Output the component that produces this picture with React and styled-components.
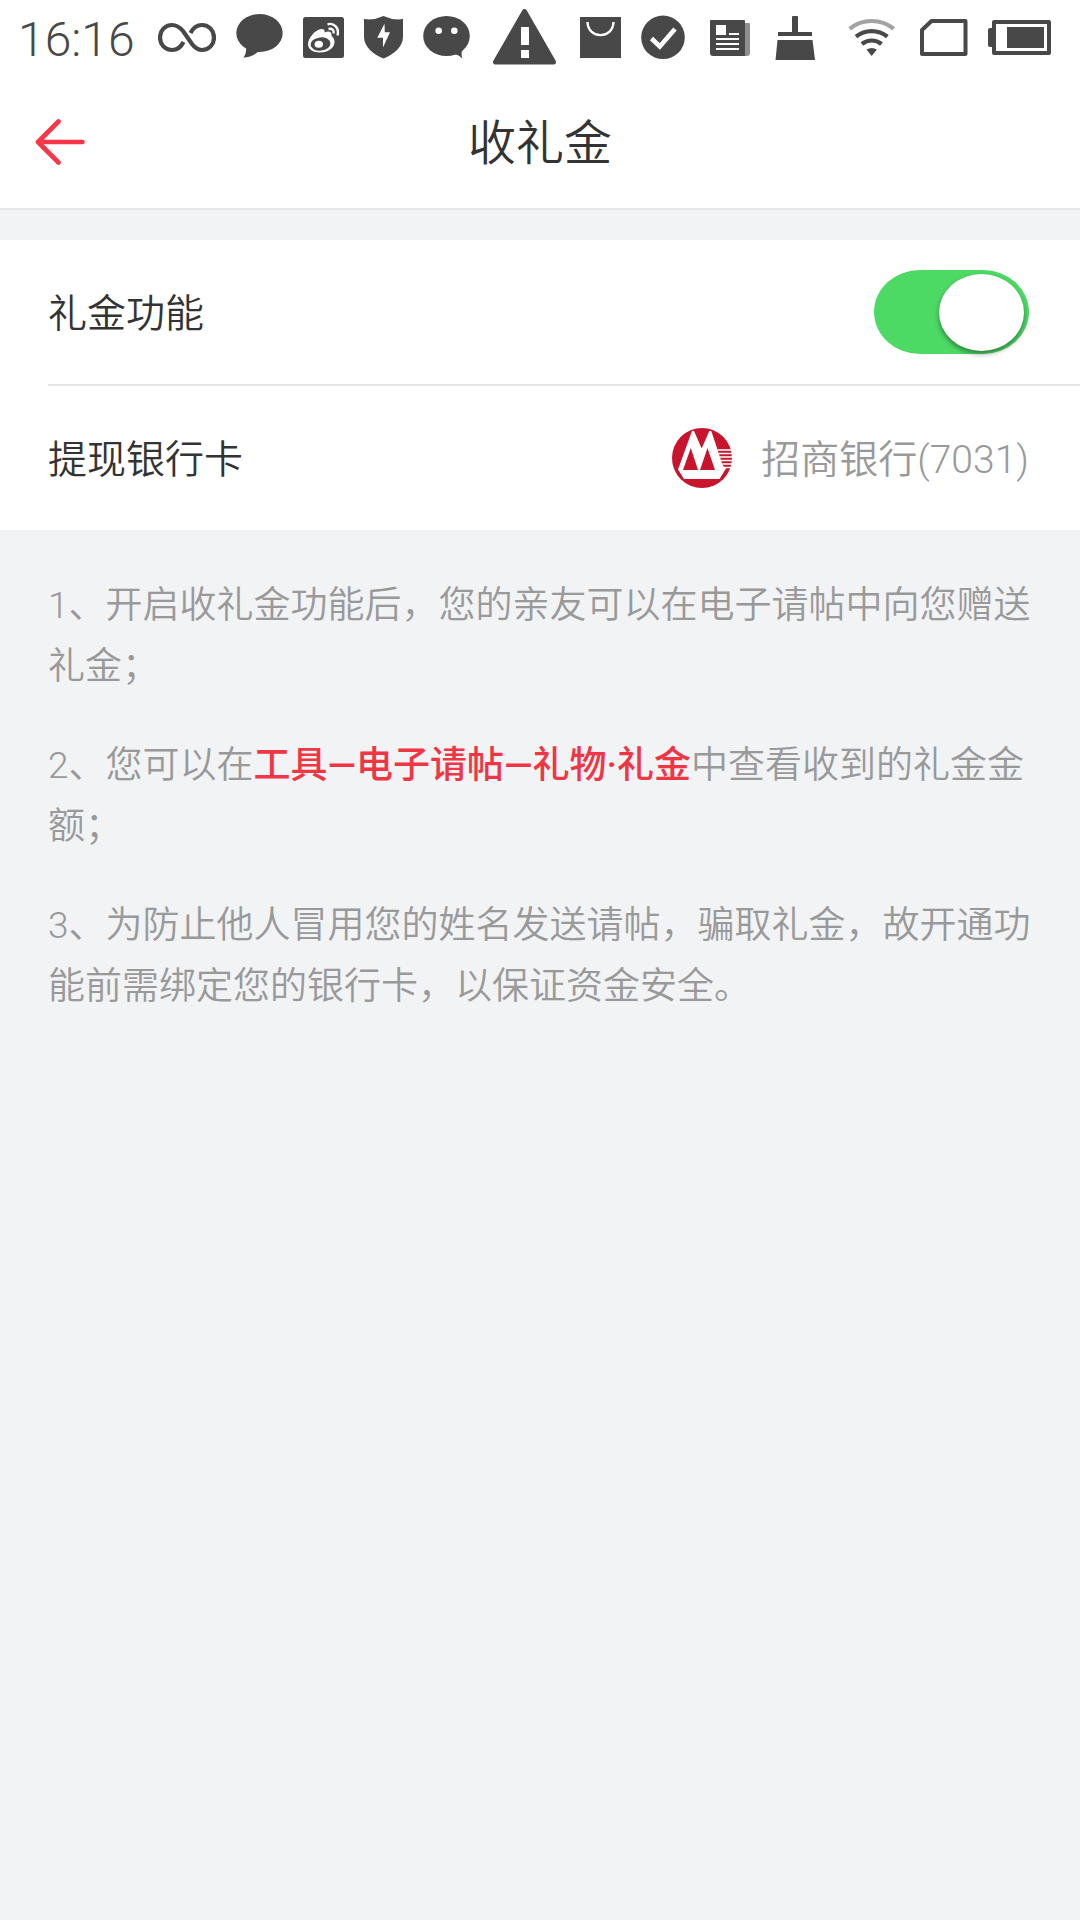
import React, {useState} from 'react'
import styled, { createGlobalStyle } from 'styled-components'


export default function App() {
    const [giftOn, setGiftOn] = useState(true)

    const toggleGift = () => {
        setGiftOn(!giftOn)
    }

    return (
        <>
            <GlobalStyle />
            <StatusBar />
            <Header>
                <BackButton type="button" aria-label="返回">
                    <BackArrow />
                </BackButton>
                <Title>收礼金</Title>
            </Header>
            <main>
                <Settings>
                    <Row>
                        <RowLabel htmlFor="gift">礼金功能</RowLabel>
                        <Switch id="gift" type="checkbox" checked={giftOn} onChange={toggleGift} />
                    </Row>
                    <Divider />
                    <Row>
                        <RowLabel as="span">提现银行卡</RowLabel>
                        <CardButton type="button">
                            <BankLogo />
                            <CardName>招商银行(7031)</CardName>
                        </CardButton>
                    </Row>
                </Settings>
                <Notes>
                    <Note>1、开启收礼金功能后，您的亲友可以在电子请帖中向您赠送礼金；</Note>
                    <Note>2、您可以在<Highlight>工具—电子请帖—礼物·礼金</Highlight>中查看收到的礼金金额；</Note>
                    <Note>3、为防止他人冒用您的姓名发送请帖，骗取礼金，故开通功能前需绑定您的银行卡，以保证资金安全。</Note>
                </Notes>
            </main>
        </>
    )
}

function StatusBar() {
    return (
        <Bar>
            <BarGroup>
                <Time>16:16</Time>
                {/* infinity */}
                <Glyph width="58" viewBox="0 0 58 74">
                    <path d="M25.500 42C23 47 19 50 14 50C7 50 2 44.500 2 37.500S7 25 14 25C19 25 22 27.500 25 31L34 44C37 48 40 50 44 50C51 50 56 44.500 56 37.500S51 25 44 25C39 25 35 28 32.500 33" fill="none" stroke="#484848" strokeWidth="4.200" />
                </Glyph>
                {/* message */}
                <Glyph width="47" viewBox="0 0 47 74">
                    <ellipse cx="23.500" cy="33" rx="23.200" ry="19" />
                    <path d="M9.500 45Q11.500 52 7.500 57.500Q16 57.500 23 51Z" />
                </Glyph>
                {/* weibo */}
                <Glyph width="41" viewBox="0 0 41 74">
                    <rect y="17" width="41" height="41" rx="2.500" />
                    <path d="M5 44C5 38 12 30 18 29C21 28.500 22 30 21.500 32.500C25 31 29 31 28.500 35.500C28.400 36.500 31.500 37.500 31.500 42C31.500 48 25 52.500 17 52.500C10 52.500 5 49 5 44Z" fill="#fff" />
                    <ellipse cx="17.500" cy="44" rx="10" ry="6.600" transform="rotate(-6 17.500 44)" />
                    <ellipse cx="15.800" cy="44.200" rx="4.200" ry="3.500" fill="#fff" />
                    <path d="M24.500 24.300C31 22.500 36.500 28 34.500 35.500M25.500 29C29 28 31.300 30 30.500 33.500" fill="none" stroke="#fff" strokeWidth="2.400" />
                </Glyph>
                {/* shield */}
                <Glyph width="39" viewBox="0 0 39 74">
                    <path d="M0 19Q10 20.500 19.500 16Q29 20.500 39 19V37C39 47 29 55 19.500 58.500C10 55 0 47 0 37Z" />
                    <path d="M20.500 23.700L13.300 37.700H19V47.500L26 32.300H20.800Z" fill="#fff" />
                </Glyph>
                {/* wechat */}
                <Glyph width="47" viewBox="0 0 47 74">
                    <ellipse cx="23.500" cy="36" rx="23.300" ry="20" />
                    <path d="M28 54.500Q34 53 39.500 58.500Q37.500 53 40 48Z" />
                    <circle cx="15.700" cy="30.700" r="3.300" fill="#fff" />
                    <circle cx="31.300" cy="30.700" r="3.300" fill="#fff" />
                </Glyph>
                {/* warning */}
                <Glyph width="69" viewBox="0 0 69 74">
                    <path d="M34.500 11.500L5.500 62H63.500Z" stroke="#484848" strokeWidth="5" strokeLinejoin="round" />
                    <path d="M31 27H39V45H31ZM31 50H39V58H31Z" fill="#fff" />
                </Glyph>
                {/* shopping bag */}
                <Glyph width="42" viewBox="0 0 42 74">
                    <rect x="1" y="17" width="41" height="41" />
                    <path d="M8.500 22C9 39.500 34 39.500 34.500 22" fill="none" stroke="#fff" strokeWidth="2.400" />
                </Glyph>
                {/* check */}
                <Glyph width="44" viewBox="0 0 44 74">
                    <circle cx="22" cy="37.300" r="21.800" />
                    <path d="M10.500 38.500L18.800 46.500L34 29" fill="none" stroke="#fff" strokeWidth="4.600" />
                </Glyph>
                {/* news */}
                <Glyph width="50" viewBox="0 0 50 74">
                    <path d="M38 23H44Q45 23 45 24V53Q45 56 42 56H38Z" fill="#8e8e8e" />
                    <path d="M6 20H39Q40 20 40 21V56H8Q5 56 5 53V21Q5 20 6 20Z" />
                    <path d="M11 25H21V35H11ZM24 33H34V35H24ZM11 38H34V40H11ZM11 43H34V45H11ZM11 48H34V50H11Z" fill="#fff" />
                </Glyph>
                {/* cleaner */}
                <Glyph width="41" viewBox="0 0 41 74">
                    <path d="M17 17Q17 16 18 16H22Q23 16 23 17V32H37V36H3V32H17ZM2.500 40H37.500L40 60H.500Z" />
                </Glyph>
            </BarGroup>
            <BarGroup>
                {/* wifi */}
                <Glyph width="53" viewBox="0 0 53 74">
                    <path d="M2.700 28.800A35 35 0 0 1 46.700 28.800" fill="none" stroke="#a3a3a3" strokeWidth="4.200" />
                    <path d="M9 36.600A25 25 0 0 1 40.400 36.600M14.900 44A15.500 15.500 0 0 1 34.500 44" fill="none" stroke="#484848" strokeWidth="4.200" />
                    <path d="M19.500 49.500Q24.700 46.500 29.900 49.500L24.700 56Z" />
                </Glyph>
                {/* sim */}
                <Glyph width="48" viewBox="0 0 48 74">
                    <path d="M2 30L11.500 21H45.500V54H2Z" fill="none" stroke="#484848" strokeWidth="4" strokeLinejoin="round" />
                </Glyph>
                {/* battery */}
                <Glyph width="63" viewBox="0 0 63 74">
                    <rect x="6" y="22" width="55" height="31" fill="none" stroke="#484848" strokeWidth="4" strokeLinejoin="round" />
                    <path d="M5 28H2Q0 28 0 30V45Q0 47 2 47H5ZM19 27H56V48H19Z" />
                </Glyph>
            </BarGroup>
        </Bar>
    )
}

function BackArrow() {
    return (
        <svg width="50" height="48" viewBox="0 0 50 48" fill="none" stroke="#f73648" strokeWidth="4.600" strokeLinecap="round" strokeLinejoin="round">
            <path d="M23.500 3.500L3 24L23.500 44.500M3 24H47.500" />
        </svg>
    )
}

function BankLogo() {
    return (
        <svg width="60" height="60" viewBox="0 0 60 60" aria-hidden="true">
            <circle cx="30" cy="30" r="30" fill="#c8152d" />
            <path d="M20 3H22L29.700 20.500L37.300 3H39.300L51 38L54 40.500L47.500 51H12L6 41.500Z" fill="#fff" />
            <path d="M18.800 20L11 42H26ZM35.500 20L28 42H43Z" fill="#c8152d" />
            <path d="M46 22H60M47 25.500H60M48 29H60M49 32.500H60M50 36H60M51 39.500H59" stroke="#fff" strokeWidth="1.500" />
        </svg>
    )
}

    const GlobalStyle = createGlobalStyle`
        body {
            margin: 0;
            background: #f1f3f5;
            color: #333;
            font-family: Roboto, "Noto Sans CJK SC", sans-serif;
            font-size: 39px;
            font-weight: 350;
        }
    `

    const Bar = styled.div`
        display: flex;
        justify-content: space-between;
        height: 74px;
        padding: 0 29px 0 18px;
        background: #fff;
    `

    const BarGroup = styled.div`
        display: flex;
        gap: 20px;
    `

    const Time = styled.span`
        padding-right: 3px;
        font-size: 48px;
        font-weight: 300;
        line-height: 80px;
        color: #484848;
    `

    const Glyph = styled.svg`
        flex: none;
        height: 74px;
        fill: #484848;
    `

    const Header = styled.header`
        display: grid;
        grid-template-columns: 1fr auto 1fr;
        align-items: center;
        height: 134px;
        padding: 0 35px;
        background: #fff;
        border-bottom: 2px solid #e6e6e6;
    `

    const BackButton = styled.button`
        display: flex;
        justify-self: start;
        padding: 2px 0 0;
        border: 0;
        background: none;
        cursor: pointer;
    `

    const Title = styled.h1`
        margin: 0;
        padding-bottom: 4px;
        font-size: 48px;
        font-weight: 350;
    `

    const Settings = styled.section`
        margin-top: 30px;
        background: #fff;
    `

    const Row = styled.div`
        display: flex;
        align-items: center;
        justify-content: space-between;
        height: 144px;
        padding: 0 51px 0 48px;
    `

    const RowLabel = styled.label`
        padding-bottom: 4px;
    `

    const Divider = styled.hr`
        height: 2px;
        margin: 0 0 0 48px;
        border: 0;
        background: #e6e6e6;
    `

    const Switch = styled.input`
        appearance: none;
        display: flex;
        align-items: center;
        justify-content: ${({ checked }) => checked ? 'flex-end' : 'flex-start'};
        width: 155px;
        height: 84px;
        margin: 0;
        padding: 0 5px;
        box-sizing: border-box;
        border-radius: 46px / 42px;
        background: ${({ checked }) => checked ? '#4cd964' : '#ddd'};
        cursor: pointer;
        &::before {
            content: '';
            width: 85px;
            height: 77px;
            border-radius: 50%;
            background: #fff;
            box-shadow: 0 3px 5px rgba(0, 0, 0, 0.4);
        }
    `

    const CardButton = styled.button`
        display: flex;
        align-items: center;
        gap: 29px;
        padding: 0;
        border: 0;
        background: none;
        font: inherit;
        color: #999;
        cursor: pointer;
    `

    const CardName = styled.span`
        padding-bottom: 4px;
    `

    const Notes = styled.section`
        padding: 45px 48px;
        color: #999;
    `

    const Note = styled.p`
        margin: 0 0 38px;
        font-size: 37px;
        line-height: 61px;
    `

    const Highlight = styled.strong`
        font-weight: 500;
        color: #f03545;
    `
